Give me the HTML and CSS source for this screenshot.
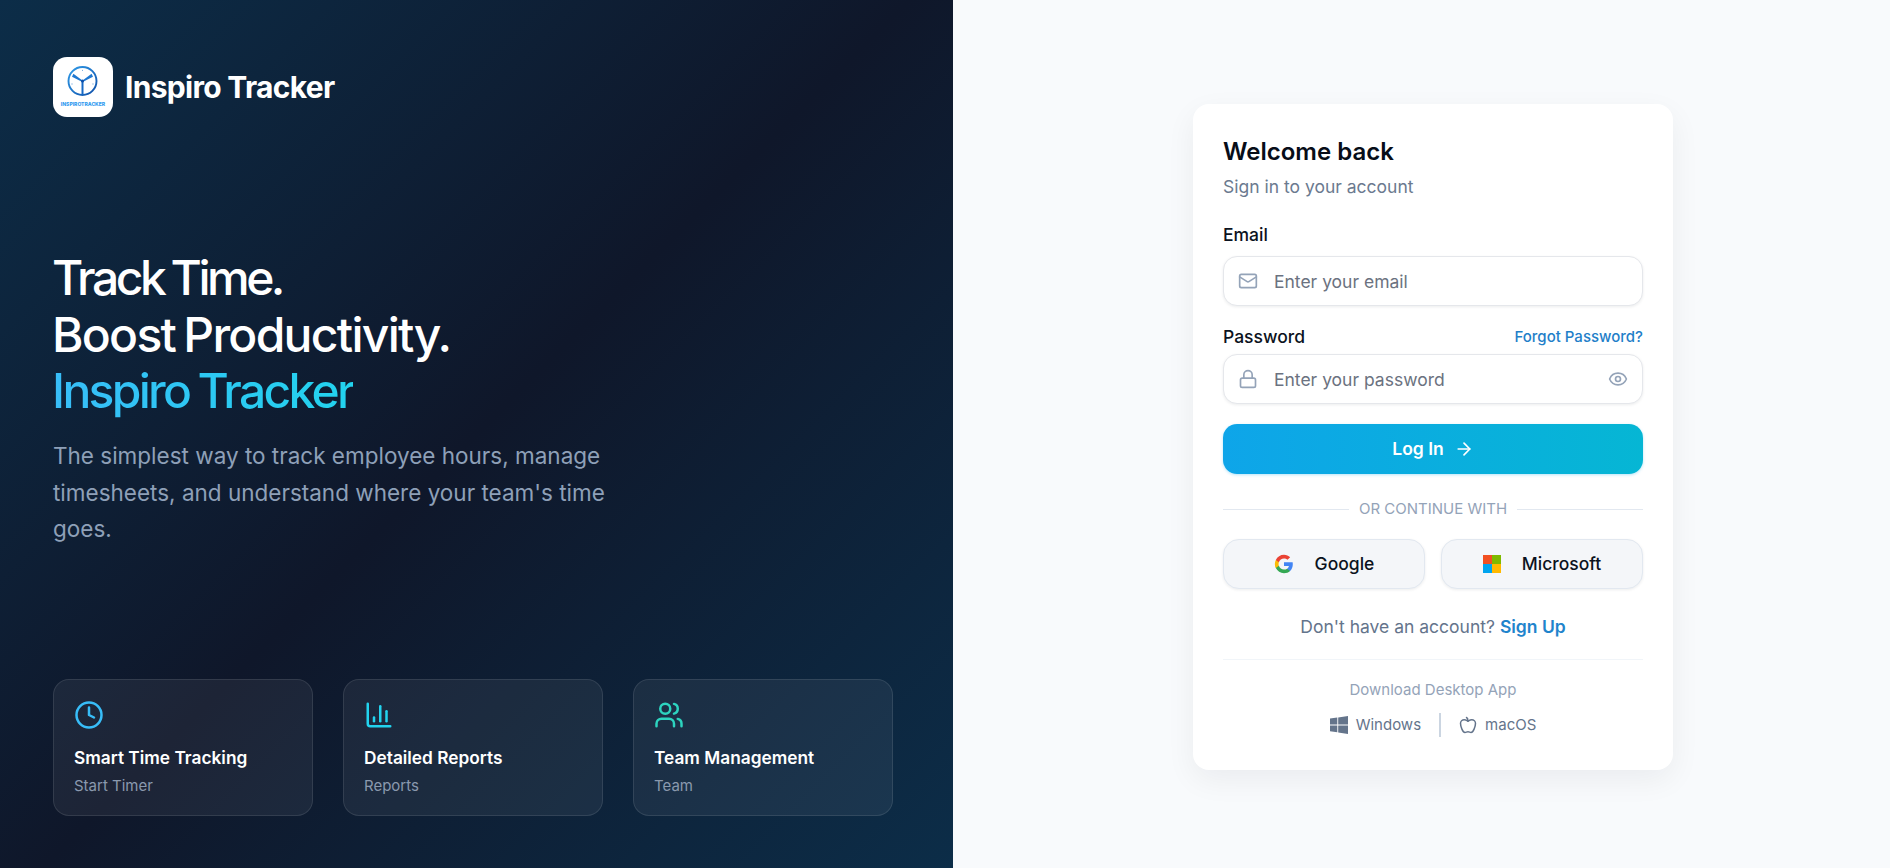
FILE: index.html
```html
<!DOCTYPE html>
<html lang="en">
<head>
<meta charset="utf-8">
<title>Inspiro Tracker</title>
<link rel="stylesheet" href="styles.css">
</head>
<body>
<main class="page">
  <section class="hero">
    <div class="brand">
      <div class="logo">
        <svg class="logo-mark" viewBox="0 0 60 60" aria-hidden="true">
          <defs><linearGradient id="lg" x1="0" y1="0" x2="1" y2="1"><stop offset="0" stop-color="#2f9be8"/><stop offset="1" stop-color="#0f4fa8"/></linearGradient></defs>
          <circle cx="29.5" cy="24" r="14" fill="none" stroke="url(#lg)" stroke-width="1.9"/>
          <path d="M29.5 23.5 28.9 24.7 19 19.8 20.4 16.8Z M29.5 23.5 30.1 24.7 40 19.8 38.6 16.8Z" fill="#1f78d0"/>
          <path d="M29.5 24V38" fill="none" stroke="#1668c4" stroke-width="2"/>
          <circle cx="29.5" cy="24" r="1.5" fill="#0f4fa8"/>
          <path d="M18.4 27h1.2M39.4 27h1.2M29 13.4h1" stroke="#4a8fd4" stroke-width=".8"/>
        </svg>
        <span class="logo-text">INSPIROTRACKER</span>
      </div>
      <span class="brand-name">Inspiro Tracker</span>
    </div>
    <div class="pitch">
      <h1 class="headline"><span class="line-track">Track Time.</span><span class="line-boost">Boost Productivity.</span><span class="accent">Inspiro Tracker</span></h1>
      <p class="lede">The simplest way to track employee hours, manage timesheets, and understand where your team's time goes.</p>
    </div>
    <div class="features">
      <article class="feature">
        <svg class="feature-icon sky" viewBox="0 0 24 24"><circle cx="12" cy="12" r="10"/><path d="M12 6v6l4 2"/></svg>
        <h3>Smart Time Tracking</h3>
        <p>Start Timer</p>
      </article>
      <article class="feature">
        <svg class="feature-icon cyan" viewBox="0 0 24 24"><path d="M3 3v16a2 2 0 0 0 2 2h16"/><path d="M18 17V9"/><path d="M13 17V5"/><path d="M8 17v-3"/></svg>
        <h3>Detailed Reports</h3>
        <p>Reports</p>
      </article>
      <article class="feature">
        <svg class="feature-icon teal" viewBox="0 0 24 24"><path d="M16 21v-2a4 4 0 0 0-4-4H6a4 4 0 0 0-4 4v2"/><circle cx="9" cy="7" r="4"/><path d="M22 21v-2a4 4 0 0 0-3-3.87"/><path d="M16 3.13a4 4 0 0 1 0 7.75"/></svg>
        <h3>Team Management</h3>
        <p>Team</p>
      </article>
    </div>
  </section>
  <section class="side">
    <form class="card">
      <h2 class="title">Welcome back</h2>
      <p class="subtitle">Sign in to your account</p>
      <label class="label label-email" for="email">Email</label>
      <div class="field">
        <svg class="field-icon" viewBox="0 0 24 24"><rect x="2" y="4" width="20" height="16" rx="2"/><path d="m22 7-8.97 5.7a1.94 1.94 0 0 1-2.06 0L2 7"/></svg>
        <input id="email" class="input" type="email" placeholder="Enter your email">
      </div>
      <div class="label-row">
        <label class="label" for="password">Password</label>
        <a class="forgot" href="#">Forgot Password?</a>
      </div>
      <div class="field">
        <svg class="field-icon" viewBox="0 0 24 24"><rect x="3" y="11" width="18" height="11" rx="2"/><path d="M7 11V7a5 5 0 0 1 10 0v4"/></svg>
        <input id="password" class="input" type="password" placeholder="Enter your password">
        <svg class="field-icon" viewBox="0 0 24 24"><path d="M2.06 12.35a1 1 0 0 1 0-.7 10.75 10.75 0 0 1 19.88 0 1 1 0 0 1 0 .7 10.75 10.75 0 0 1-19.88 0"/><circle cx="12" cy="12" r="3"/></svg>
      </div>
      <button class="login" type="button">Log In
        <svg class="login-arrow" viewBox="0 0 24 24"><path d="M5 12h14"/><path d="m12 5 7 7-7 7"/></svg>
      </button>
      <div class="divider"><span>OR CONTINUE WITH</span></div>
      <div class="socials">
        <button class="social" type="button">
          <svg class="social-icon google" viewBox="0 0 24 24"><path fill="#4285F4" d="M22.56 12.25c0-.78-.07-1.53-.2-2.25H12v4.26h5.92c-.26 1.37-1.04 2.53-2.21 3.31v2.77h3.57c2.08-1.92 3.28-4.74 3.28-8.09z"/><path fill="#34A853" d="M12 23c2.97 0 5.46-.98 7.28-2.66l-3.57-2.77c-.98.66-2.23 1.06-3.71 1.06-2.86 0-5.29-1.93-6.16-4.53H2.18v2.84C3.99 20.53 7.7 23 12 23z"/><path fill="#FBBC05" d="M5.84 14.09c-.22-.66-.35-1.36-.35-2.09s.13-1.43.35-2.09V7.07H2.18C1.43 8.55 1 10.22 1 12s.43 3.45 1.18 4.93l3.66-2.84z"/><path fill="#EA4335" d="M12 5.38c1.62 0 3.06.56 4.21 1.64l3.15-3.15C17.45 2.09 14.97 1 12 1 7.7 1 3.99 3.47 2.18 7.07l3.66 2.84c.87-2.6 3.3-4.53 6.16-4.53z"/></svg>
          Google
        </button>
        <button class="social" type="button">
          <svg class="social-icon" viewBox="0 0 18 18"><rect width="9" height="9" fill="#F25022"/><rect x="9" width="9" height="9" fill="#7FBA00"/><rect y="9" width="9" height="9" fill="#00A4EF"/><rect x="9" y="9" width="9" height="9" fill="#FFB900"/></svg>
          Microsoft
        </button>
      </div>
      <p class="signup">Don't have an account? <a href="#">Sign Up</a></p>
      <div class="download">
        <p class="download-title">Download Desktop App</p>
        <div class="platforms">
          <a class="platform" href="#">
            <svg class="platform-icon" viewBox="0 0 18 18"><path fill="#64748b" d="M0 2.6 7.3 1.6V8.4H0ZM8.2 1.5 18 0V8.4H8.2ZM0 9.4H7.3V16.3L0 15.3ZM8.2 9.4H18V18L8.2 16.5Z"/></svg>
            Windows
          </a>
          <span class="platform-sep"></span>
          <a class="platform" href="#">
            <svg class="platform-icon line" viewBox="0 0 24 24"><path d="M12 20.94c1.5 0 2.75 1.06 4 1.06 3 0 6-8 6-12.22A4.91 4.91 0 0 0 17 5c-2.22 0-4 1.44-5 2-1-.56-2.78-2-5-2a4.9 4.9 0 0 0-5 4.78C2 14 5 22 8 22c1.25 0 2.5-1.06 4-1.06Z"/><path d="M10 2c1 .5 2 2 2 5"/></svg>
            macOS
          </a>
        </div>
      </div>
    </form>
  </section>
</main>
</body>
</html>
```
FILE: styles.css
```css
* { box-sizing: border-box; }
html, body { margin: 0; height: 100%; }
body { font-family: Inter, "Liberation Sans", sans-serif; overflow: hidden; }
h1, h2, h3, p { margin: 0; }
a { text-decoration: none; }

.page { display: flex; height: 868px; }

.hero {
  width: 953px;
  flex: none;
  display: flex;
  flex-direction: column;
  padding: 57px 60px 52px 53px;
  background: linear-gradient(135deg, #0c2d48 0%, #0f172a 50%, #0c2d48 100%);
  color: #fff;
}
.brand { display: flex; align-items: center; gap: 12px; }
.logo {
  width: 60px; height: 60px; border-radius: 14px; background: #fff;
  position: relative; flex: none;
}
.logo-mark { display: block; width: 60px; height: 60px; }
.logo-text {
  position: absolute; left: 0; right: 0; top: 44px;
  text-align: center; font-size: 5px; line-height: 6px; font-weight: 800; color: #2f9bf0;
}
.brand-name { font-size: 30px; font-weight: 700; letter-spacing: -0.7px; }

.pitch { margin-top: 133px; }
.headline {
  display: flex; flex-direction: column;
  font-size: 48px; line-height: 56.7px; font-weight: 500; margin-left: -1px;
}
.line-track { letter-spacing: -3.5px; word-spacing: -2px; }
.line-boost { letter-spacing: -1.7px; word-spacing: -3px; }
.accent {
  width: max-content;
  background: linear-gradient(90deg, #38bdf8, #22d3ee);
  -webkit-background-clip: text; background-clip: text; color: transparent;
  letter-spacing: -2.7px; word-spacing: -2px;
}
.lede { margin-top: 18px; width: 580px; font-size: 22.5px; line-height: 36.6px; color: #8ea0b8; }

.features { margin-top: auto; display: flex; gap: 30px; }
.feature {
  flex: 1; height: 137px; padding: 20px;
  border-radius: 16px; border: 1px solid rgba(255,255,255,.1);
  background: rgba(255,255,255,.06);
}
.feature-icon { display: block; width: 30px; height: 30px; fill: none; stroke-width: 2; stroke-linecap: round; stroke-linejoin: round; }
.sky { stroke: #38bdf8; }
.cyan { stroke: #22d3ee; }
.teal { stroke: #2dd4bf; }
.feature h3 { margin-top: 15px; font-size: 17.3px; line-height: 26px; font-weight: 600; color: #fff; }
.feature p { margin-top: 4px; font-size: 15px; line-height: 22px; color: #8a99ae; }

.side { flex: 1; display: flex; align-items: flex-start; justify-content: center; padding: 104px 0 0 23px; background: #f8fafc; }
.card {
  width: 480px; height: 666px; padding: 30px;
  background: #fff; border-radius: 16px;
  box-shadow: 0 10px 30px rgba(15,23,42,.06);
  display: flex; flex-direction: column;
}
.title { font-size: 24px; line-height: 36px; font-weight: 600; color: #070d18; }
.subtitle { margin-top: 4px; font-size: 17.5px; line-height: 26px; color: #6b7a8f; }
.label { font-size: 17.5px; line-height: 24px; font-weight: 500; color: #0b1220; }
.label-email { margin-top: 23px; margin-bottom: 9px; }
.label-row { display: flex; justify-content: space-between; align-items: flex-start; margin-top: 19px; margin-bottom: 5px; }
.forgot { font-size: 15px; line-height: 24px; font-weight: 500; color: #1f7fc9; }

.field {
  height: 50px; display: flex; align-items: center; gap: 16px; padding: 0 14px;
  border: 1px solid #e5e7eb; border-radius: 14px; background: #fff;
  box-shadow: 0 1px 3px rgba(15,23,42,.08);
}
.field-icon { width: 20px; height: 20px; flex: none; fill: none; stroke: #94a3b8; stroke-width: 2; stroke-linecap: round; stroke-linejoin: round; }
.input { flex: 1; min-width: 0; border: 0; outline: 0; padding: 0; background: transparent; font: 400 17.5px Inter, sans-serif; color: #0b1220; }
.input::placeholder { color: #6b7280; opacity: 1; }

.login {
  margin-top: 20px; height: 50px; border: 0; border-radius: 14px; padding: 0 0 1px;
  background: linear-gradient(90deg, #0ea5e9, #06b6d4);
  color: #fff; font: 600 17.5px Inter, sans-serif;
  display: flex; align-items: center; justify-content: center; gap: 10px;
  box-shadow: 0 1px 3px rgba(14,165,233,.3);
}
.login-arrow { width: 20px; height: 20px; fill: none; stroke: #fff; stroke-width: 2; stroke-linecap: round; stroke-linejoin: round; }

.divider { margin-top: 26px; display: flex; align-items: center; gap: 10px; font-size: 15px; line-height: 18px; color: #94a3b8; }
.divider::before, .divider::after { content: ""; flex: 1; height: 1px; background: #e2e8f0; }

.socials { margin-top: 21px; display: flex; gap: 16px; }
.social {
  flex: 1; height: 50px; display: flex; align-items: center; justify-content: center; gap: 21px; padding: 0 0 1px;
  border: 1px solid #e2e8f0; border-radius: 16px; background: #f4f6f9;
  font: 500 17.5px Inter, sans-serif; color: #0b1220;
  box-shadow: 0 1px 3px rgba(15,23,42,.08);
}
.social-icon { width: 18px; height: 18px; flex: none; }
.social-icon.google { width: 20px; height: 20px; }

.signup { margin-top: 26px; text-align: center; font-size: 17.5px; line-height: 24px; color: #64748b; }
.signup a { font-weight: 600; color: #1f84cc; }

.download { margin-top: 20px; padding-top: 20px; border-top: 1px solid #f1f5f9; display: flex; flex-direction: column; align-items: center; }
.download-title { font-size: 15px; line-height: 20px; color: #94a3b8; }
.platforms { margin-top: 13px; display: flex; align-items: center; gap: 18px; }
.platform { display: flex; align-items: center; gap: 8px; font-size: 15px; line-height: 24px; color: #64748b; }
.platform-icon { width: 18px; height: 18px; flex: none; }
.platform-icon.line { fill: none; stroke: #64748b; stroke-width: 2; stroke-linecap: round; stroke-linejoin: round; }
.platform-sep { width: 2px; height: 24px; background: #cbd5e1; }
```
